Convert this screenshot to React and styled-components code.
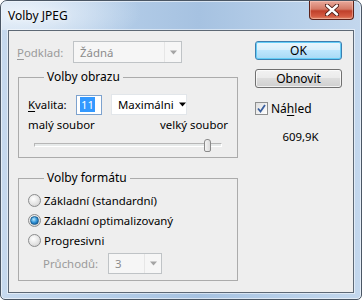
import React from 'react'
import styled, { createGlobalStyle } from 'styled-components'

const Global = createGlobalStyle`
  html, body { margin: 0; padding: 0; background: #ffffff; }
  body {
    font-family: "Noto Sans", "Liberation Sans", sans-serif;
    font-size: 11.4px;
    color: #000;
  }
  * { box-sizing: border-box; }
`

const Window = styled.div`
  width: 362px;
  height: 300px;
  border: 1px solid #4a5664;
  border-radius: 7px 7px 5px 5px;
  background: linear-gradient(90deg, #c6d9ee 0%, #b4cde8 30%, #a6c2e1 55%, #b7cfe9 80%, #c3d7ed 100%);
  display: flex;
  flex-direction: column;
  overflow: hidden;
  box-shadow: inset 0 0 0 1px rgba(255, 255, 255, 0.55);
`

const TitleBar = styled.div`
  height: 29px;
  display: flex;
  align-items: flex-start;
  padding-left: 7px;
  background: radial-gradient(ellipse 120px 40px at 20px 12px, rgba(240, 246, 252, 0.9), rgba(240, 246, 252, 0) 100%);
`

const Title = styled.div`
  line-height: 29px;
  font-size: 12px;
  color: #000;
  text-shadow: 0 0 6px rgba(255, 255, 255, 0.9);
`

const CloseButton = styled.div`
  margin-left: auto;
  margin-right: 7px;
  width: 45px;
  height: 19px;
  border: 1px solid #5c2219;
  border-top: none;
  border-radius: 0 0 4px 4px;
  background: linear-gradient(180deg, #e9a99b 0%, #d47a67 45%, #c0402a 55%, #d45b42 85%, #e08a6a 100%);
  box-shadow: inset 0 0 0 1px rgba(255, 210, 200, 0.45);
  display: flex;
  align-items: center;
  justify-content: center;
`

const Client = styled.div`
  flex: 1;
  margin: 0 7px 6px 7px;
  background: #eeeeee;
  border: 1px solid #5d6875;
  box-shadow: 0 0 0 1px rgba(255, 255, 255, 0.5);
  display: flex;
`

const LeftCol = styled.div`
  padding: 10px 0 0 8px;
  width: 230px;
`

const RightCol = styled.div`
  margin-left: auto;
  margin-right: 11px;
  width: 87px;
  padding-top: 10px;
  display: flex;
  flex-direction: column;
  align-items: stretch;
`

const Row = styled.div`
  display: flex;
  align-items: center;
  height: ${p => p.$h || 20}px;
  margin-top: ${p => p.$mt || 0}px;
  padding-left: ${p => p.$pl || 0}px;
`

const Label = styled.span`
  width: ${p => p.$w}px;
  flex-shrink: 0;
  color: ${p => (p.$disabled ? '#9a9a9a' : '#000')};
`

const U = styled.span`
  text-decoration: underline;
  text-underline-offset: 2px;
`

const Select = styled.div`
  width: ${p => p.$w}px;
  height: ${p => p.$h || 21}px;
  display: flex;
  align-items: center;
  background: ${p => (p.$disabled ? '#f6f6f6' : '#ffffff')};
  border: 1px solid ${p => (p.$disabled ? '#bfc3c6' : '#e2e6ea')};
  color: ${p => (p.$disabled ? '#8c8c8c' : '#000')};
  padding-left: 6px;
`

const SelectText = styled.span`
  flex: 1;
  white-space: nowrap;
`

const ArrowBox = styled.div`
  width: 17px;
  height: 100%;
  flex-shrink: 0;
  display: flex;
  align-items: center;
  justify-content: center;
  border-left: 1px solid ${p => (p.$disabled ? '#e6e6e6' : 'transparent')};
`

const Group = styled.fieldset`
  margin: ${p => p.$mt}px 0 0 1px;
  width: 220px;
  border: 1px solid #ababab;
  padding: ${p => p.$pt}px 9px ${p => p.$pb}px 9px;
  min-width: 0;
`

const Legend = styled.legend`
  margin-left: 16px;
  padding: 0 3px;
  line-height: 16px;
  font-size: 12px;
`

const NumberInput = styled.div`
  width: 26px;
  height: 20px;
  border: 1px solid #7da2ce;
  background: #fff;
  display: flex;
  align-items: center;
  padding-left: 3px;
  margin-right: 9px;
`

const Selected = styled.span`
  background: #3399ff;
  color: #fff;
  line-height: 15px;
  padding: 0 1px;
`

const Scale = styled.div`
  display: flex;
  justify-content: space-between;
  line-height: 15px;
  margin-top: 2px;
`

const SliderWrap = styled.div`
  position: relative;
  height: 16px;
  margin: 5px 6px 0 6px;
  display: flex;
  align-items: center;
`

const Track = styled.div`
  flex: 1;
  height: 4px;
  border: 1px solid #b6b6b6;
  border-bottom-color: #ffffff;
  border-right-color: #ffffff;
  background: #e7eaea;
`

const Thumb = styled.div`
  position: absolute;
  left: 170px;
  top: 2px;
  width: 7px;
  height: 13px;
  border: 1px solid #8a8a8a;
  border-radius: 3px 3px 2px 2px;
  background: linear-gradient(90deg, #f4f4f4, #dcdcdc);
`

const RadioRow = styled.label`
  display: flex;
  align-items: center;
  height: 20px;
  gap: 3px;
`

const RadioDot = styled.span`
  width: 13px;
  height: 13px;
  border-radius: 50%;
  border: 1px solid #8b8c8d;
  background: radial-gradient(circle at 40% 35%, #ffffff 0%, #e4e4e4 55%, #c9c9c9 100%);
  display: flex;
  align-items: center;
  justify-content: center;
  &::after {
    content: '';
    width: 7px;
    height: 7px;
    border-radius: 50%;
    display: ${p => (p.$checked ? 'block' : 'none')};
    background: radial-gradient(circle at 40% 35%, #b7eaff 0%, #2f91d6 50%, #0d4f8a 100%);
    border: 1px solid #1d5f8e;
  }
`

const Button = styled.div`
  height: 19px;
  margin-top: ${p => p.$mt || 0}px;
  display: flex;
  align-items: center;
  justify-content: center;
  border-radius: 3px;
  border: 1px solid ${p => (p.$primary ? '#3c7fb1' : '#707070')};
  background: ${p =>
    p.$primary
      ? 'linear-gradient(180deg, #eaf6fd 0%, #d9f0fc 45%, #bee6fd 50%, #a7d9f5 100%)'
      : 'linear-gradient(180deg, #f2f2f2 0%, #ebebeb 45%, #dddddd 50%, #cfcfcf 100%)'};
  box-shadow: inset 0 0 0 1px ${p => (p.$primary ? '#64cdf7' : 'rgba(255,255,255,0.7)')};
  font-size: 12px;
`

const CheckRow = styled.label`
  display: flex;
  align-items: center;
  height: 16px;
  margin-top: 12px;
  gap: 3px;
  font-size: 12px;
`

const CheckBox = styled.span`
  width: 13px;
  height: 13px;
  border: 1px solid #8e8f8f;
  background: linear-gradient(135deg, #dedede, #ffffff);
  display: flex;
  align-items: center;
  justify-content: center;
`

const SizeText = styled.div`
  margin-top: 13px;
  line-height: 16px;
  text-align: center;
  padding-left: 4px;
`

function Arrow({ color }) {
  return (
    <svg width="9" height="5" viewBox="0 0 9 5">
      <path d="M1 0.5 L8 0.5 L4.5 4.5 Z" fill={color} />
    </svg>
  )
}

export default function App() {
  return (
    <>
      <Global />
      <Window>
        <TitleBar>
          <Title>Volby JPEG</Title>
          <CloseButton>
            <svg width="14" height="12" viewBox="0 0 14 12">
              <path d="M2 1.5 L12 10.5 M12 1.5 L2 10.5" stroke="#4a1a14" strokeWidth="4.2" strokeLinecap="round" />
              <path d="M2 1.5 L12 10.5 M12 1.5 L2 10.5" stroke="#ffffff" strokeWidth="2.4" strokeLinecap="round" />
            </svg>
          </CloseButton>
        </TitleBar>
        <Client>
          <LeftCol>
            <Row $h={22}>
              <Label $w={56} $disabled>
                <U>P</U>odklad:
              </Label>
              <Select $w={109} $h={22} $disabled>
                <SelectText>Žádná</SelectText>
                <ArrowBox $disabled>
                  <Arrow color="#a4a4a4" />
                </ArrowBox>
              </Select>
            </Row>

            <Group $mt={6} $pt={9} $pb={4}>
              <Legend>Volby obrazu</Legend>
              <Row $h={21}>
                <Label $w={48}>
                  <U>K</U>valita:
                </Label>
                <NumberInput>
                  <Selected>11</Selected>
                </NumberInput>
                <Select $w={76}>
                  <SelectText>Maximálni</SelectText>
                  <ArrowBox>
                    <Arrow color="#000" />
                  </ArrowBox>
                </Select>
              </Row>
              <Scale>
                <span>malý soubor</span>
                <span>velký soubor</span>
              </Scale>
              <SliderWrap>
                <Track />
                <Thumb />
              </SliderWrap>
            </Group>

            <Group $mt={12} $pt={4} $pb={6}>
              <Legend>Volby formátu</Legend>
              <RadioRow>
                <RadioDot />
                <span>Základní (standardní)</span>
              </RadioRow>
              <RadioRow>
                <RadioDot $checked />
                <span>Základní optimalizovaný</span>
              </RadioRow>
              <RadioRow>
                <RadioDot />
                <span>Progresivni</span>
              </RadioRow>
              <Row $h={21} $mt={3} $pl={15}>
                <Label $w={65} $disabled>
                  Průchodů:
                </Label>
                <Select $w={54} $disabled>
                  <SelectText>3</SelectText>
                  <ArrowBox $disabled>
                    <Arrow color="#a4a4a4" />
                  </ArrowBox>
                </Select>
              </Row>
            </Group>
          </LeftCol>

          <RightCol>
            <Button $primary>OK</Button>
            <Button $mt={9}>Obnovit</Button>
            <CheckRow>
              <CheckBox>
                <svg width="9" height="9" viewBox="0 0 9 9">
                  <path d="M1 4.5 L3.5 7.5 L8 1" stroke="#3a5f9e" strokeWidth="1.8" fill="none" />
                </svg>
              </CheckBox>
              <span>
                Ná<U>h</U>led
              </span>
            </CheckRow>
            <SizeText>609,9K</SizeText>
          </RightCol>
        </Client>
      </Window>
    </>
  )
}
